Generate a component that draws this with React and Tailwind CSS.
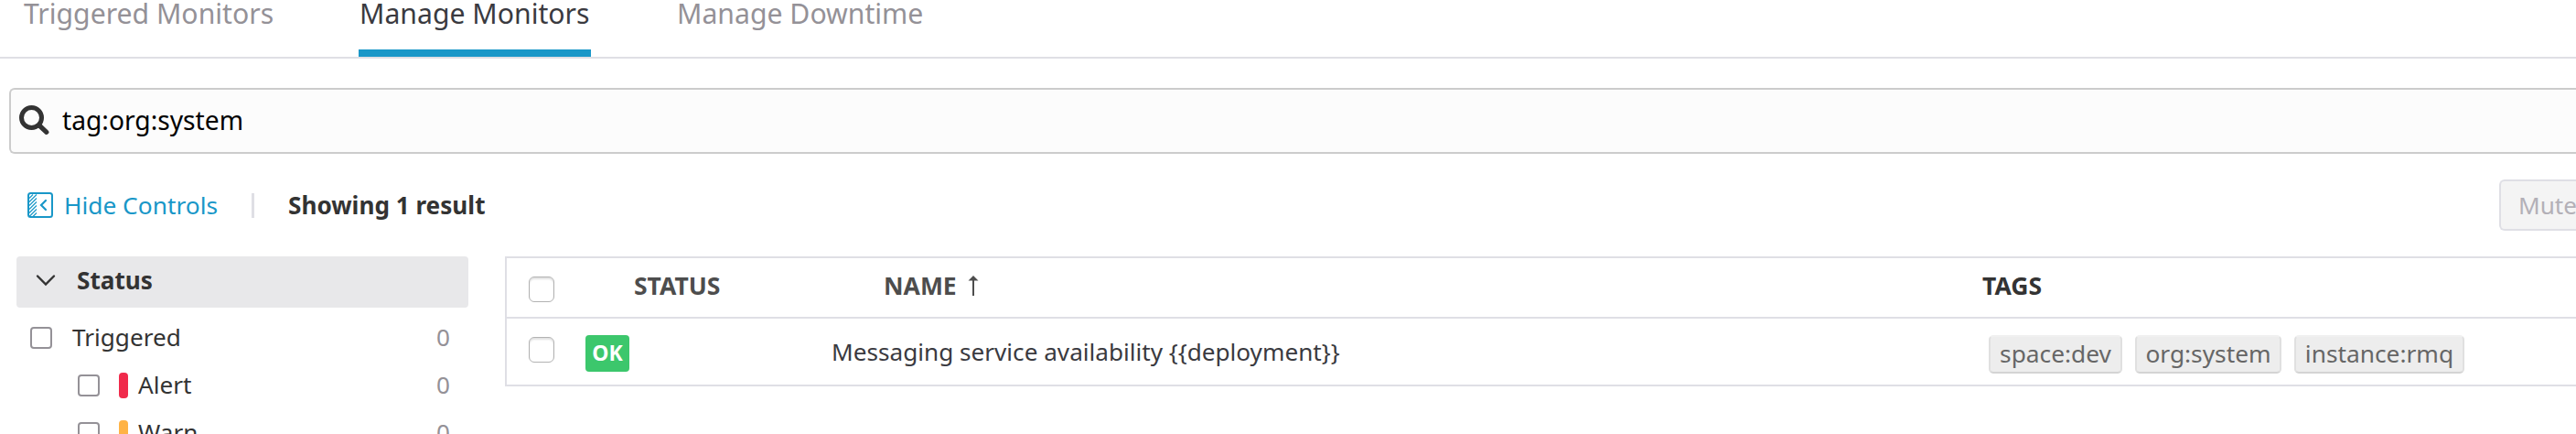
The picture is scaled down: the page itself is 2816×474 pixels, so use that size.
import React from "react";

function Tab({ label, active }) {
  return (
    <div
      className={
        active
          ? "flex h-[62px] flex-col justify-between text-[#3a3a40]"
          : "h-[62px] text-[#949197]"
      }
    >
      <span className={`block text-[30.2px] leading-[30px] ${active ? "pl-[1px]" : ""}`}>{label}</span>
      {active && <span className="block h-2 bg-[#1997c8]" />}
    </div>
  );
}

function SearchIcon() {
  return (
    <svg className="h-[33px] w-[33px]" viewBox="0 0 33 33" fill="none" stroke="#333333">
      <circle cx="13.5" cy="13.5" r="11" strokeWidth="5" />
      <path d="M22 22l7.8 7.3" strokeWidth="5.2" strokeLinecap="round" />
    </svg>
  );
}

function PanelIcon() {
  return (
    <svg className="h-7 w-7" viewBox="0 0 28 28" fill="none" stroke="#1997c8">
      <rect x="1" y="1" width="26" height="26" rx="2.5" strokeWidth="2" />
      <path
        d="M2 6.500l4-4M2 10.500l8-8M2 14.500l8-8M2 18.500l8-8M2 22.500l8-8M2 26.500l8-8M6 26.500l4-4"
        strokeWidth="1.1"
      />
      <path d="M20 9l-5 5 5 5" strokeWidth="2.2" strokeLinecap="round" />
    </svg>
  );
}

function FacetRow({ label, color, nested }) {
  return (
    <div className={`flex h-[52px] shrink-0 items-center pr-5 ${nested ? "pl-[67px]" : "pl-[15px]"}`}>
      <span className="h-6 w-6 shrink-0 rounded-[4px] border-2 border-[#949197] bg-white" />
      {color && <span className={`ml-[21px] h-7 w-[10px] rounded-[4px] ${color}`} />}
      <span className={`grow pb-[2px] text-[#333333] ${nested ? "ml-[11px]" : "ml-[22px]"}`}>{label}</span>
      <span className="pb-[2px] text-[#949197]">0</span>
    </div>
  );
}

function TableCheckbox() {
  return (
    <span className="block h-7 w-7 rounded-[6px] border border-[#b2b2b2] bg-white shadow-[inset_0_2px_2px_rgba(0,0,0,0.12)]" />
  );
}

function Tag({ children, className }) {
  return (
    <span
      className={`flex h-[42px] items-center justify-center rounded-[5px] border-2 border-x-[#e0e0e0] border-t-[#f0f0f0] border-b-[#d4d4d4] bg-[#ededed] pb-[3px] text-[26.3px] text-[#666666] ${className}`}
    >
      {children}
    </span>
  );
}

export default function App() {
  return (
    <div className="flex h-[474px] w-[2816px] flex-col overflow-hidden bg-white font-['Noto_Sans','Open_Sans',sans-serif] text-[26.15px] leading-[36px] whitespace-nowrap">
      <nav className="flex h-16 shrink-0 border-b-2 border-[#dfdfe5]">
        <div className="w-[392px] pl-[26px]">
          <Tab label="Triggered Monitors" />
        </div>
        <div className="w-[348px]">
          <div className="w-[254px]">
            <Tab label="Manage Monitors" active />
          </div>
        </div>
        <Tab label="Manage Downtime" />
      </nav>

      <div className="mt-8 ml-[10px] flex h-[72px] shrink-0 items-center rounded-l-[6px] border-2 border-r-0 border-[#cccccc] bg-[#fcfcfc] pb-[2px] pl-[9px]">
        <SearchIcon />
        <span className="ml-[14px] text-[28.2px] text-black">tag:org:system</span>
      </div>

      <div className="mt-7 flex h-14 shrink-0 items-center pl-[30px]">
        <PanelIcon />
        <span className="ml-3 w-[205px] text-[26.3px] text-[#1997c8]">Hide Controls</span>
        <span className="h-[27px] w-[3px] bg-[#dfdfe5]" />
        <span className="ml-[37px] grow font-bold text-[#333333]">Showing 1 result</span>
        <div className="flex h-14 w-[84px] items-center overflow-hidden rounded-l-[6px] border-2 border-r-0 border-[#dfdfe5] bg-[#f4f4f4] pl-[19px] text-[#b3b0b7]">
          Mute
        </div>
      </div>

      <div className="mt-7 flex min-h-0 grow">
        <aside className="ml-[18px] flex w-[494px] shrink-0 flex-col">
          <div className="flex h-14 shrink-0 items-center rounded-[4px] bg-[#e8e8ea] pb-[5px] pl-[21px]">
            <svg className="h-[14px] w-[22px]" viewBox="0 0 22 14" fill="none" stroke="#333333">
              <path d="M2 2.500l9 9 9-9" strokeWidth="2.4" strokeLinecap="round" />
            </svg>
            <span className="ml-[23px] font-bold text-[#333333]">Status</span>
          </div>
          <div className="mt-[7px] flex flex-col">
            <FacetRow label="Triggered" />
            <FacetRow label="Alert" color="bg-[#f02a4b]" nested />
            <FacetRow label="Warn" color="bg-[#ffb345]" nested />
          </div>
        </aside>

        <section className="ml-10 flex h-[142px] grow flex-col border-2 border-r-0 border-[#dfdfe5]">
          <div className="flex h-[66px] shrink-0 items-center border-b-2 border-[#dfdfe5] pl-6 text-[26.5px] font-bold text-[#4d4d4d]">
            <div className="w-[115px] pt-[3px]">
              <TableCheckbox />
            </div>
            <div className="w-[273px] pb-1">STATUS</div>
            <div className="flex w-[1201px] items-center pb-1">
              NAME
              <svg className="ml-3 h-[22px] w-3" viewBox="0 0 12 22" fill="#4d4d4d">
                <path d="M6 0l5.500 5.500h-11zM5 4h2v18H5z" />
              </svg>
            </div>
            <div className="pb-1 text-[#333333]">TAGS</div>
          </div>
          <div className="flex grow items-center pl-6">
            <div className="w-[62px] pb-1">
              <TableCheckbox />
            </div>
            <div className="w-[269px] pt-1">
              <span className="flex h-10 w-12 items-center justify-center rounded-[4px] bg-[#3cc76c] pb-[2px] text-[23px] font-bold text-white">
                OK
              </span>
            </div>
            <div className="w-[1265px] text-[#3a3a40]">{"Messaging service availability {{deployment}}"}</div>
            <div className="flex gap-[14px] pt-[6px]">
              <Tag className="w-[146px]">space:dev</Tag>
              <Tag className="w-[160px]">org:system</Tag>
              <Tag className="w-[186px]">instance:rmq</Tag>
            </div>
          </div>
        </section>
      </div>
    </div>
  );
}
